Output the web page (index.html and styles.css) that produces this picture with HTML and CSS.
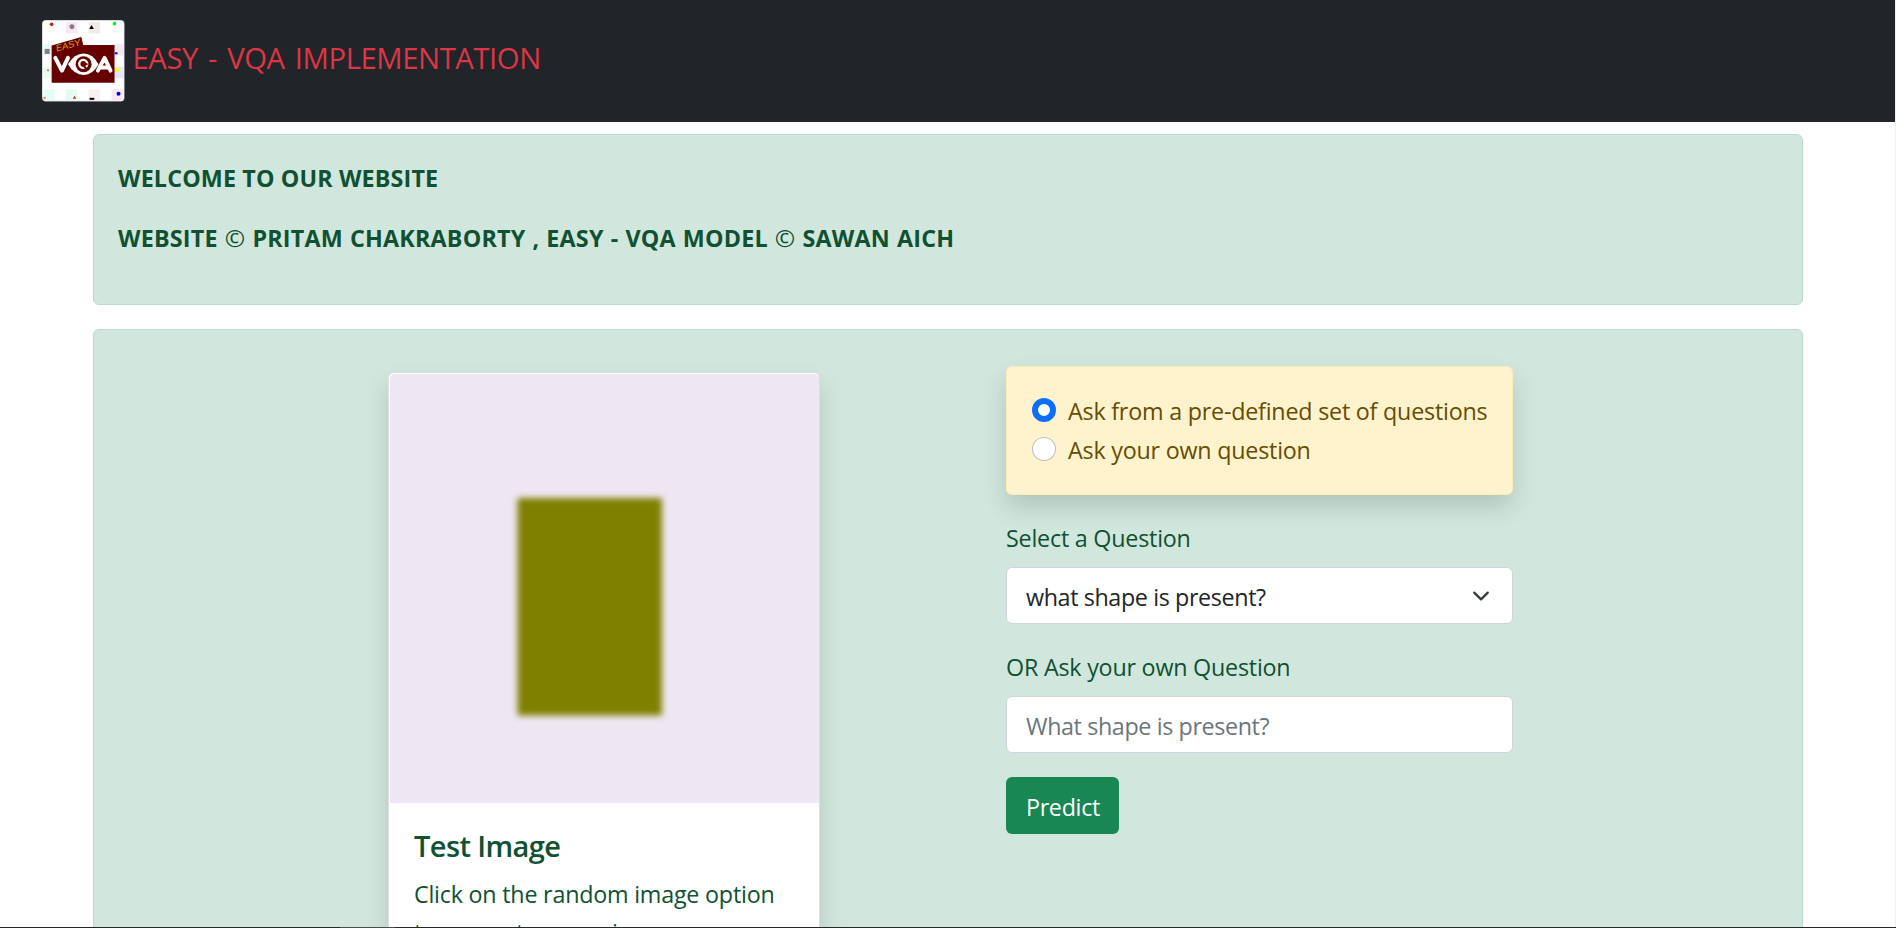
FILE: index.html
```html
<!DOCTYPE html>
<html lang="en">
<head>
<meta charset="utf-8">
<title>Easy - VQA Implementation</title>
<link rel="stylesheet" href="styles.css">
</head>
<body>
<div class="page">
  <nav class="navbar">
    <svg class="logo" viewBox="37 30 248 245" preserveAspectRatio="none">
      <rect x="37" y="30" width="248" height="245" rx="12" fill="#c9cccf"/>
      <rect x="39" y="32" width="244" height="241" rx="11" fill="#fff"/>
      <rect x="41" y="36" width="32" height="32" fill="#fdfdf4"/>
      <rect x="109" y="36" width="34" height="34" fill="#f8e6f6"/>
      <rect x="177" y="36" width="35" height="34" fill="#f1ebe4"/>
      <rect x="246" y="36" width="34" height="34" fill="#fafafa"/>
      <rect x="41" y="103" width="32" height="34" fill="#e8f7f1"/>
      <rect x="246" y="103" width="36" height="34" fill="#efe9f3"/>
      <rect x="41" y="171" width="32" height="34" fill="#ecfcec"/>
      <rect x="246" y="171" width="36" height="34" fill="#e6e4fa"/>
      <rect x="43" y="238" width="32" height="33" fill="#e4fcf6"/>
      <rect x="109" y="238" width="34" height="34" fill="#e4faf1"/>
      <rect x="177" y="238" width="35" height="34" fill="#fbf0f0"/>
      <rect x="246" y="238" width="34" height="33" fill="#fbe6f0"/>
      <circle cx="66" cy="43" r="5.500" fill="#a82a2a"/>
      <circle cx="127" cy="50" r="7.500" fill="#808080"/>
      <path d="M186 45l7 12h-14z" fill="#000"/>
      <circle cx="255" cy="41" r="5.500" fill="#0f0"/>
      <rect x="45" y="117" width="15" height="15" fill="#808080"/>
      <circle cx="260" cy="130" r="4" fill="#11f"/>
      <circle cx="55" cy="181" r="3" fill="#dc6060"/>
      <circle cx="263" cy="180" r="6.500" fill="#ff0"/>
      <circle cx="267" cy="252" r="6" fill="#00f"/>
      <path d="M135 258l5 9h-10z" fill="#a93a2a"/>
      <rect x="180" y="264" width="14" height="6" fill="#000"/>
      <rect x="41" y="261" width="7" height="6" fill="#f27a6c"/>
      <path d="M66 107L155 81L161 105H255V219H66z" fill="#660000"/>
      <text class="logo-easy" x="81" y="125" transform="rotate(-15 81 125)" textLength="76" lengthAdjust="spacingAndGlyphs">EASY</text>
      <path d="M77 144L97 182L115 144M205 182L225 144L243 182M211 173H237" fill="none" stroke="#fff" stroke-width="12" stroke-linecap="round" stroke-linejoin="round"/>
      <path d="M115 163Q134 131 162 131Q190 131 207 163Q190 195 162 195Q134 195 115 163z" fill="#fff"/>
      <circle cx="162" cy="163" r="24" fill="#660000"/>
      <circle cx="161" cy="162" r="12" fill="none" stroke="#fff" stroke-width="7"/>
      <path d="M160 163h14M163 168l9 12" fill="none" stroke="#660000" stroke-width="6"/>
    </svg>
    <span class="brand">EASY - VQA IMPLEMENTATION</span>
  </nav>
  <main class="container">
    <section class="alert welcome">
      <p class="greeting">WELCOME TO OUR WEBSITE</p>
      <p class="credits">WEBSITE <span class="copy">©</span> PRITAM CHAKRABORTY , EASY - VQA MODEL <span class="copy">©</span> SAWAN AICH</p>
    </section>
    <section class="alert workspace">
      <article class="card">
        <svg class="sample" viewBox="0 0 429 429">
          <defs><filter id="soft" x="-10%" y="-10%" width="120%" height="120%"><feGaussianBlur stdDeviation="3"/></filter></defs>
          <rect width="429" height="429" fill="#eee6f3"/>
          <rect x="127.500" y="124" width="144.500" height="217.500" fill="#808000" filter="url(#soft)"/>
        </svg>
        <div class="card-body">
          <h5 class="card-title">Test Image</h5>
          <p class="card-text">Click on the random image option</p>
          <p class="card-text">to generate a new image</p>
        </div>
      </article>
      <form class="ask">
        <div class="modes">
          <label class="mode"><input type="radio" name="mode" checked><span>Ask from a pre-defined set of questions</span></label>
          <label class="mode"><input type="radio" name="mode"><span>Ask your own question</span></label>
        </div>
        <label class="field-label">Select a Question</label>
        <div class="control" role="combobox"><span>what shape is present?</span>
          <svg class="chevron" viewBox="0 0 16 16"><path d="M2 5l6 6 6-6" fill="none" stroke="#343a40" stroke-width="2" stroke-linecap="round" stroke-linejoin="round"/></svg>
        </div>
        <label class="field-label">OR Ask your own Question</label>
        <input class="control own" type="text" placeholder="What shape is present?">
        <button class="predict" type="button">Predict</button>
      </form>
    </section>
  </main>
</div>
<div class="edge"><span></span></div>
</body>
</html>
```
FILE: styles.css
```css
* { box-sizing: border-box; }
body {
  margin: 0;
  height: 928px;
  display: flex;
  flex-direction: column;
  overflow: hidden;
  background: #fff;
  color: #212529;
  font-family: "Open Sans", "Noto Sans", sans-serif;
  font-size: 23.3px;
  line-height: 36px;
  letter-spacing: -0.22px;
}
p, h5 { margin: 0; white-space: nowrap; }
.page { height: 927px; overflow: hidden; border-right: 1px solid #f0f0f0; }
.navbar {
  height: 122px;
  padding: 0 42px;
  display: flex;
  align-items: center;
  gap: 8px;
  background: #212529;
}
.logo { width: 82.5px; height: 81.5px; flex: none; }
.logo-easy { font: italic 28px "Liberation Sans", sans-serif; fill: #d8a020; }
.brand { color: #dc3545; font-size: 29.3px; line-height: 45px; letter-spacing: -0.45px; word-spacing: 3px; padding-bottom: 6px; white-space: nowrap; }
.container { width: 1710px; margin: 12px 0 0 93px; }
.alert { border: 1px solid #badbcc; border-radius: 6px; background: #d1e7dd; color: #0f5132; }
.welcome { height: 171px; padding: 25px 24px; display: flex; flex-direction: column; gap: 24px; font-weight: 700; }
.greeting { letter-spacing: 0.14px; }
.credits { letter-spacing: 0.2px; word-spacing: 0.8px; }
.copy { font-weight: 400; font-size: 24.5px; line-height: 20px; }
.workspace { height: 760px; margin-top: 24px; padding: 36px 0 0 294px; display: flex; align-items: flex-start; gap: 186px; }
.card {
  width: 432px;
  height: 700px;
  margin-top: 6px;
  padding: 1px 0 0 1px;
  border: 1px solid #dcdfdd;
  border-top-color: #cfe3da;
  border-radius: 6px;
  background: #fff;
  box-shadow: 0 12px 24px rgba(0, 0, 0, 0.15);
}
.sample { display: block; width: 429px; height: 429px; border-radius: 5px 5px 0 0; }
.card-body { padding: 25px 24px 24px; }
.card-title { margin-bottom: 12px; font-size: 29px; line-height: 36px; font-weight: 600; letter-spacing: -0.6px; }
.card-text + .card-text { padding-top: 2px; }
.ask { width: 507px; display: flex; flex-direction: column; align-items: stretch; }
.modes {
  height: 129px;
  margin-bottom: 24px;
  padding: 25px;
  border: 1px solid #ffecb5;
  border-radius: 6px;
  background: #fff3cd;
  color: #664d03;
  box-shadow: 0 12px 24px rgba(0, 0, 0, 0.15);
}
.mode { height: 39px; display: flex; gap: 12px; white-space: nowrap; }
.mode span { padding-top: 1px; }
.mode input {
  appearance: none;
  flex: none;
  width: 24px;
  height: 24px;
  margin: 6px 0 0;
  border: 1px solid rgba(0, 0, 0, 0.25);
  border-radius: 50%;
  background: #fff;
}
.mode input:checked { border: 6.5px solid #0d6efd; }
.field-label { height: 36px; padding-top: 1px; margin-bottom: 12px; }
.control {
  height: 57px;
  margin-bottom: 24px;
  padding: 2px 18px 0 19px;
  display: flex;
  align-items: center;
  justify-content: space-between;
  border: 1px solid #ced4da;
  border-radius: 6px;
  background: #fff;
  color: #212529;
  font: inherit;
  letter-spacing: -0.38px;
}
.own::placeholder { color: #6c757d; opacity: 1; }
.chevron { width: 18px; height: 18px; margin: -2px 4px 0 0; }
.predict {
  width: 113px;
  height: 57px;
  padding: 2px 0 0 1px;
  border: 0;
  border-radius: 6px;
  background: #198754;
  color: #fff;
  font: inherit;
  letter-spacing: -0.3px;
}
.edge { height: 1px; padding-left: 340px; background: #24292c; }
.edge span { display: block; width: 55px; height: 1px; background: #4a4d4f; }
```
